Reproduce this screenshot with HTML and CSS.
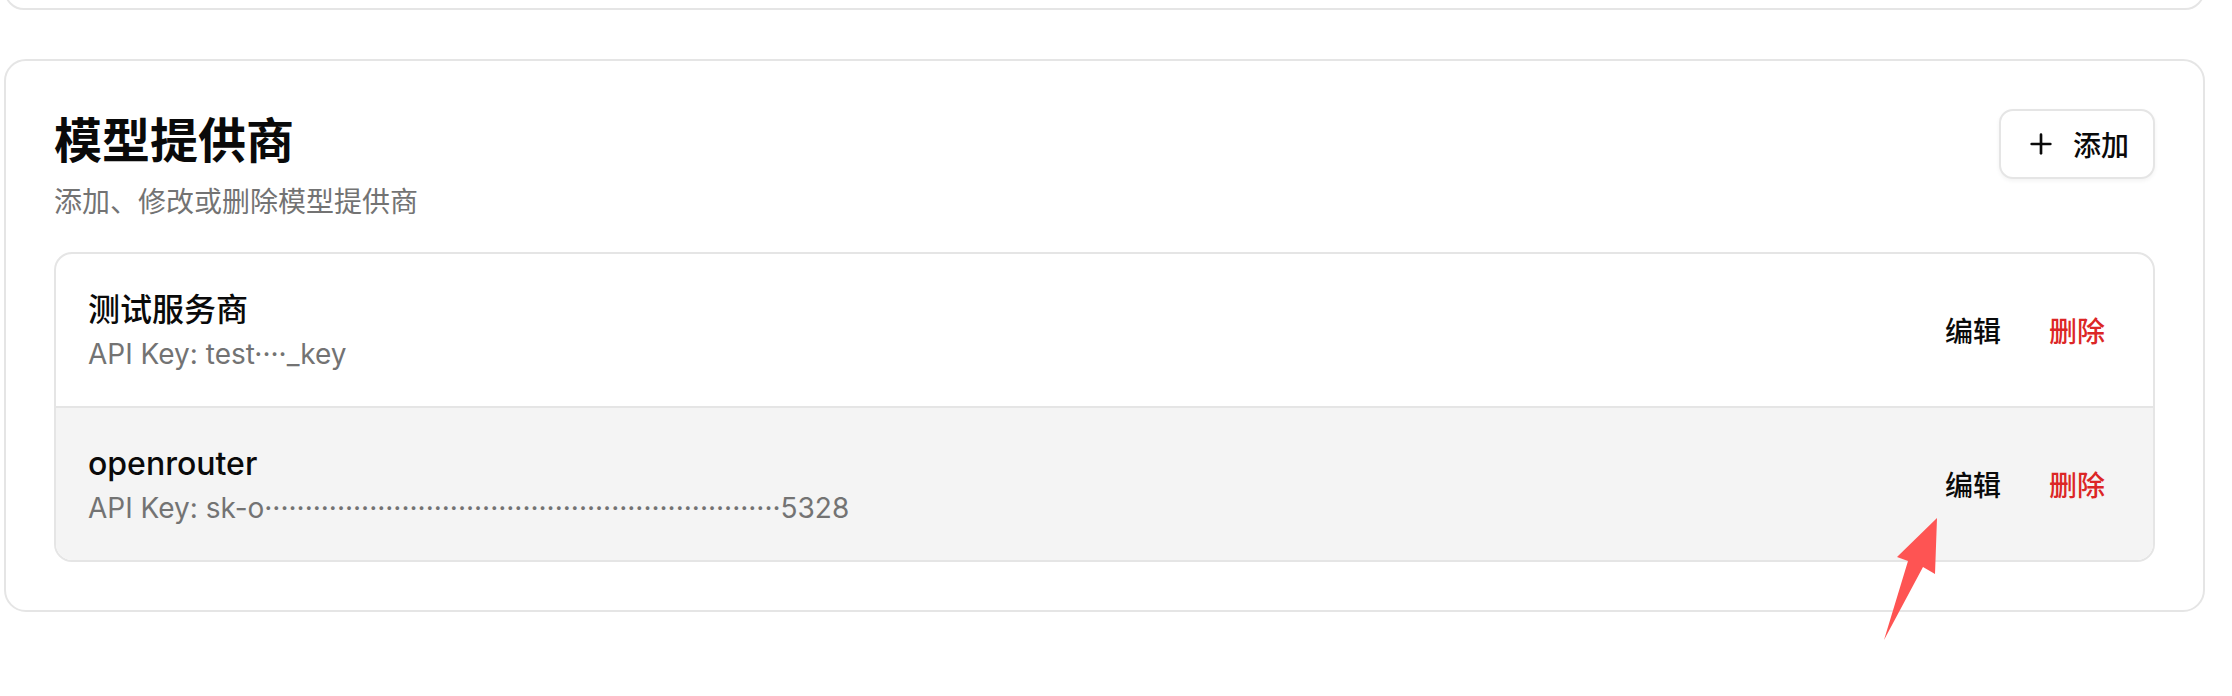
FILE: index.html
```html
<!DOCTYPE html>
<html lang="zh-CN">
<head>
<meta charset="utf-8">
<title>模型提供商</title>
<link rel="stylesheet" href="styles.css">
</head>
<body>
<div class="page">
  <div class="card card-prev"></div>
  <section class="card">
    <header class="card-header">
      <div class="heading">
        <h2 class="title">模型提供商</h2>
        <p class="subtitle">添加、修改或删除模型提供商</p>
      </div>
      <button class="add-btn" type="button">
        <svg class="plus" viewBox="0 0 24 24" fill="none" stroke="currentColor" stroke-width="2" stroke-linecap="round" stroke-linejoin="round"><path d="M5 12h14"/><path d="M12 5v14"/></svg>
        <span>添加</span>
      </button>
    </header>
    <div class="list">
      <div class="row">
        <div class="info">
          <div class="name">测试服务商</div>
          <div class="key">API Key: test····_key</div>
        </div>
        <div class="actions">
          <button class="act" type="button">编辑</button>
          <button class="act danger" type="button">删除</button>
        </div>
      </div>
      <div class="row hover">
        <div class="info">
          <div class="name">openrouter</div>
          <div class="key">API Key: sk-o················································&middot;&middot;&middot;&middot;&middot;&middot;&middot;&middot;&middot;&middot;&middot;&middot;&middot;&middot;&middot;&middot;5328</div>
        </div>
        <div class="actions">
          <button class="act" type="button">编辑</button>
          <button class="act danger" type="button">删除</button>
        </div>
      </div>
    </div>
  </section>
</div>
<svg class="arrow" width="2232" height="696" viewBox="0 0 2232 696">
  <polygon points="1937,518 1935,574 1923,567 1884,640 1908,561 1897,557" fill="#fe5453"/>
</svg>
</body>
</html>
```
FILE: styles.css
```css
* { box-sizing: border-box; }
html, body { margin: 0; padding: 0; background: #ffffff; }
body {
  font-family: Inter, "Noto Sans CJK SC", sans-serif;
  color: #0a0a0a;
  position: relative;
  width: 2232px;
  height: 696px;
  overflow: hidden;
}
.page {
  padding: 0 27px 0 4px;
  display: flex;
  flex-direction: column;
  gap: 49px;
}
.card {
  border: 2px solid #e5e5e5;
  border-radius: 22px;
  background: #fff;
  padding: 48px;
}
.card-prev {
  height: 40px;
  margin-top: -30px;
  padding: 0;
}
.card-header {
  display: flex;
  justify-content: space-between;
  align-items: flex-start;
  margin-bottom: 30px;
}
.title {
  margin: 0;
  font-size: 48px;
  line-height: 64px;
  font-weight: 600;
  font-family: Inter, "Noto Sans CJK SC", sans-serif;
}
.subtitle {
  margin: 9px 0 0;
  font-size: 28px;
  line-height: 40px;
  color: #737373;
}
.add-btn {
  display: flex;
  align-items: center;
  gap: 16px;
  height: 70px;
  padding: 0 24px;
  border: 2px solid #e5e5e5;
  border-radius: 14px;
  background: #fff;
  box-shadow: 0 2px 4px rgba(0,0,0,0.05);
  font-family: inherit;
  font-size: 28px;
  font-weight: 500;
  color: #0a0a0a;
}
.plus { width: 32px; height: 32px; }
.list {
  border: 2px solid #e5e5e5;
  border-radius: 18px;
  overflow: hidden;
}
.row {
  display: flex;
  align-items: center;
  justify-content: space-between;
  padding: 32px;
}
.row + .row { border-top: 2px solid #e5e5e5; }
.row.hover { background: #f4f4f4; }
.name {
  font-size: 32px;
  line-height: 48px;
  font-weight: 500;
}
.key {
  font-size: 28px;
  line-height: 40px;
  color: #737373;
}
.actions {
  display: flex;
  gap: 16px;
}
.act {
  border: 0;
  background: transparent;
  padding: 0 16px;
  height: 64px;
  font-family: inherit;
  font-size: 28px;
  font-weight: 500;
  color: #0a0a0a;
}
.act.danger { color: #dc2626; }
.arrow {
  position: absolute;
  left: 0;
  top: 0;
  pointer-events: none;
}
```
